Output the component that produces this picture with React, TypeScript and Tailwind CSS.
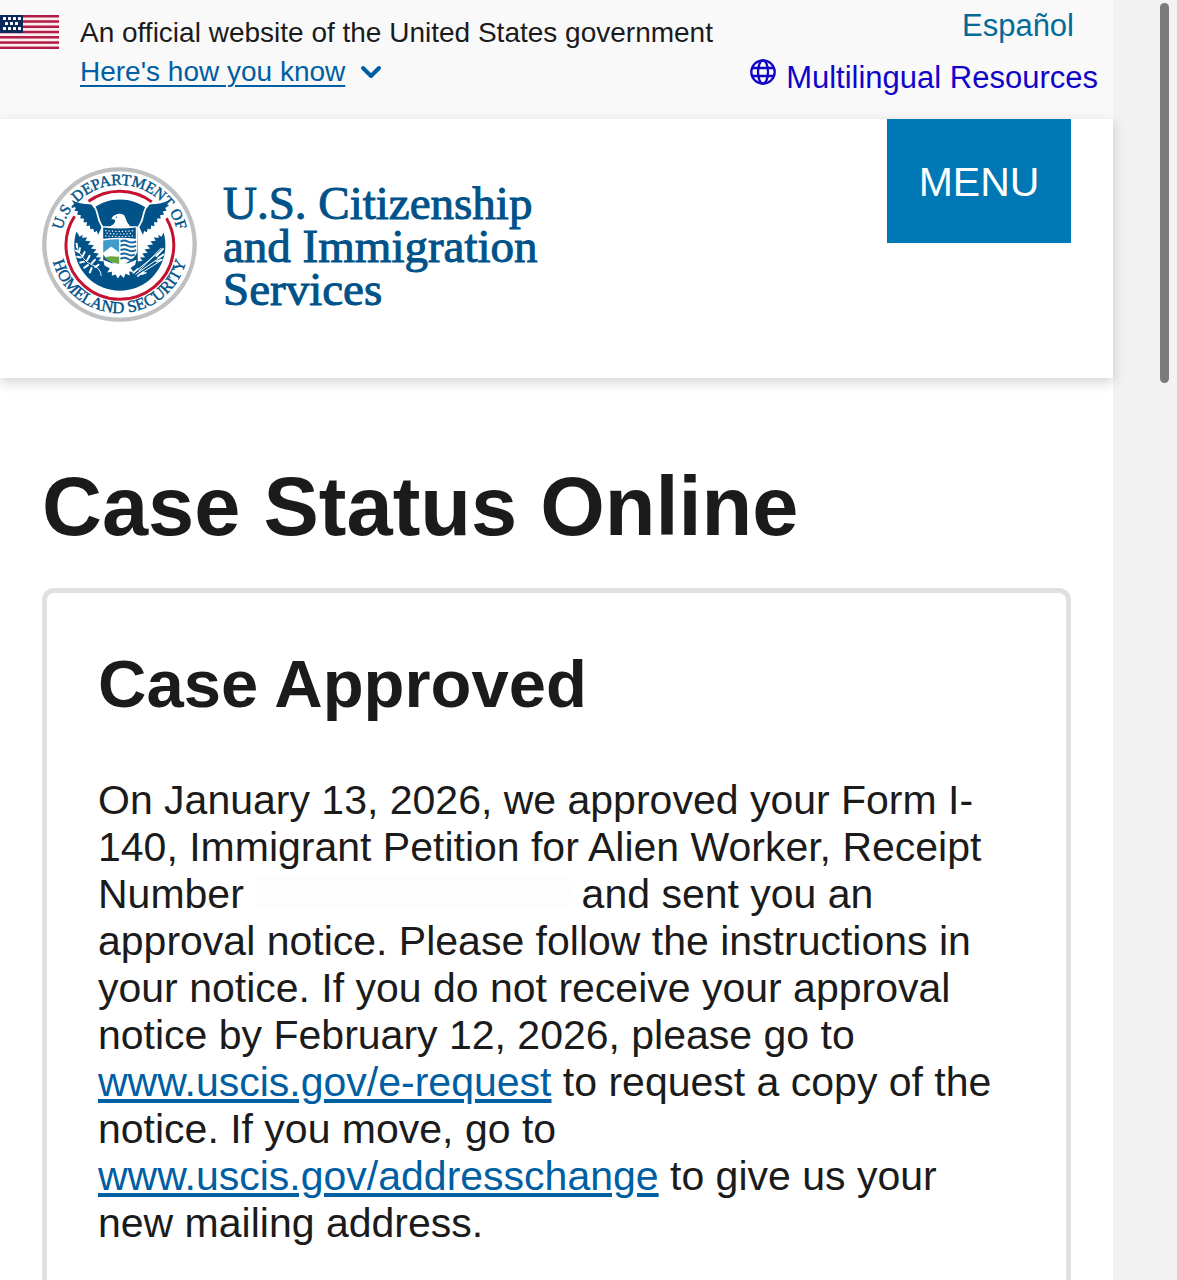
import { ChevronDown } from 'lucide-react'

const stripes = [0, 2, 4, 6, 8, 10, 12]

const stars = [
  [3, 2], [8, 2], [13, 2], [18, 2],
  [5, 7], [10, 7], [15, 7],
  [3, 12], [8, 12], [13, 12], [18, 12],
]

function Flag() {
  return (
    <svg viewBox="0 0 59 34" className="mt-[15px] h-[34px] w-[59px] shrink-0" aria-hidden="true">
      <rect width="59" height="34" fill="#fdeef2" />
      {stripes.map((n) => (
        <rect key={n} y={n * 2.63} width="59" height="2.5" fill="#b01c44" />
      ))}
      <rect width="23" height="18" fill="#0b2a5b" />
      {stars.map(([x, y]) => (
        <rect key={`${x}-${y}`} x={x} y={y} width="3" height="3" rx="0.6" fill="#fff" />
      ))}
    </svg>
  )
}

function Globe() {
  return (
    <svg
      viewBox="0 0 26 26"
      className="mb-3 size-[26px]"
      fill="none"
      stroke="currentColor"
      strokeWidth="2.3"
      aria-hidden="true"
    >
      <circle cx="13" cy="13" r="11.7" />
      <ellipse cx="13" cy="13" rx="5" ry="11.7" />
      <path d="M2.5 9h21M2.5 17h21" />
    </svg>
  )
}

function Wing() {
  return (
    <>
      <path
        fill="#005288"
        d="M123 135Q148 148 178 148Q194 153 201 172Q209 196 217 216L203 239L198 228L191 234L188 221L179 225L178 212L168 214L169 201L159 203L160 191L149 191L151 181L139 179L143 170L131 167L136 159L124 152L131 147Z"
      />
      {/* breast feathers between the wing and the shield */}
      <path
        fill="#fff"
        d="M190 150Q199 158 204 180Q210 205 220 217L218 320L204 318L212 308L196 307L205 296L188 294L198 284L181 281L190 271L172 269L180 259L164 258L170 248L154 249L157 240L147 246L137 228L134 215L135 190L203 240L213 217Q201 198 197 174Q194 160 184 152Z"
      />
    </>
  )
}

function Seal() {
  return (
    <svg viewBox="34 36 466 466" className="size-[155px] shrink-0" role="img" aria-label="Department of Homeland Security seal">
      <defs>
        <path id="seal-top" d="M89 268a178 178 0 0 1 356 0" />
        <path id="seal-bottom" d="M60 268a207 207 0 0 0 414 0" />
      </defs>
      <circle cx="267" cy="269" r="226" fill="#fff" stroke="#bfc0c2" strokeWidth="13" />
      <circle cx="268" cy="271" r="137" fill="#005288" />

      {/* clears the disc behind the outstretched wings */}
      <path fill="#fff" d="M118 150L184 150L203 238L137 232L118 240Z" />
      <path fill="#fff" d="M422 150L356 150L337 238L403 232L422 240Z" />
      <g fill="none" stroke="#c41230" strokeWidth="9">
        <path d="M174 139A160 160 0 0 1 364 141" />
        <path d="M132 184A162 162 0 1 0 408 190" />
      </g>
      <Wing />
      <g transform="translate(540) scale(-1 1)">
        <Wing />
      </g>

      {/* head and neck */}
      <path
        fill="#fff"
        d="M243 194Q244 184 254 180Q268 173 281 181Q286 190 290 202L300 216H236L249 208Q255 202 254 195L246 192Z"
      />
      <circle cx="258" cy="187" r="2" fill="#005288" />

      {/* tail */}
      <path
        fill="#fff"
        d="M218 315L244 325H292L318 315L314 330L300 340L310 352L296 350L298 362L285 357L280 370L270 360L262 371L255 359L244 363L244 351L230 353L238 341L222 332Z"
      />

      {/* shield */}
      <path fill="#fff" d="M214 214H320V290Q316 314 268 334Q220 314 214 290Z" />
      <path fill="#005288" d="M218 218Q268 224 316 218V252Q268 246 218 252Z" />
      <g stroke="#fff" strokeWidth="3.5" strokeDasharray="4 6" fill="none">
        <path d="M224 227Q268 232 312 227" />
        <path d="M228 235Q268 240 308 235" />
        <path d="M224 243Q268 247 312 243" />
      </g>
      <path fill="#3f9bcb" d="M218 257Q240 253 266 253V293L242 275L218 294Z" />
      <path fill="#fff" d="M218 296L242 277L266 295V305L236 306Z" />
      <path fill="#69a742" d="M220 308L240 304L266 306V328Q238 322 220 308Z" />
      <g fill="none" stroke="#17699f" strokeWidth="6">
        <path d="M270 260q11 -6 22 0t25 0" />
        <path d="M270 273q11 -6 22 0t25 0" />
        <path d="M270 286q11 -6 22 0t25 0" />
        <path d="M270 299q11 -6 22 0t21 0" />
        <path d="M270 312q11 -6 22 0t10 0" />
      </g>

      {/* olive branch */}
      <g stroke="#fff" strokeLinecap="round" fill="none">
        <path strokeWidth="3" d="M137 275Q157 320 184 330T212 362" />
        <path
          strokeWidth="6"
          d="M138 267l2 10M136 287l8 5M148 280l-2 10M140 306l10 2M162 292l-6 12M149 323l11-2M177 303l-7 13M161 339l11-8M193 315l-9 10M178 353l5-13M204 330l-10 6"
        />
      </g>
      {/* arrows */}
      <g stroke="#fff" strokeLinecap="round" fill="none">
        <path strokeWidth="3" d="M312 352L396 284M316 358L398 302M322 362L394 316M326 348L392 280" />
        <path strokeWidth="5" d="M378 304l20-22M383 310l16-11M378 320l16-6M308 354l14-12M322 364l16-12M334 358l12-4" />
      </g>

      <g fill="#005288" stroke="#005288" strokeWidth="1.2" fontFamily="'Liberation Serif', serif" textAnchor="middle">
        <text fontSize="47">
          <textPath href="#seal-top" startOffset="50%">U.S. DEPARTMENT OF</textPath>
        </text>
        <text fontSize="50">
          <textPath href="#seal-bottom" startOffset="50%">HOMELAND SECURITY</textPath>
        </text>
      </g>
    </svg>
  )
}

export default function App() {
  return (
    <div className="flex min-h-screen bg-[#f2f2f2] font-['Liberation_Sans',sans-serif] text-[#1b1b1b]">
      <div className="flex grow flex-col bg-white">
        <div className="flex h-[119px] justify-between bg-[#f9f9f9] pr-[15px]">
          <div className="flex">
            <Flag />
            <div className="ml-[21px] mt-[13px] text-[28px] leading-[39px]">
              <p>An official website of the United States government</p>
              <button type="button" className="flex items-center gap-[10px] text-[#005ea2]">
                <span className="underline decoration-2 underline-offset-4">Here's how you know</span>
                <ChevronDown size={32} strokeWidth={3} />
              </button>
            </div>
          </div>
          <div className="flex flex-col items-end text-[31px] leading-[52px]">
            <a href="#es" className="mr-6 text-[#046b99]">Español</a>
            <a href="#languages" className="flex items-center gap-[10px] text-[#1005c9]">
              <Globe />
              Multilingual Resources
            </a>
          </div>
        </div>

        <header className="flex h-[259px] items-start justify-between bg-white px-[42px] shadow-[0_4px_12px_rgba(0,0,0,0.18)]">
          <a href="#home" className="mt-12 flex items-center gap-[26px]">
            <Seal />
            <span className="pt-1 font-['Liberation_Serif',serif] text-[47px] leading-[43px] text-[#005288] [-webkit-text-stroke:1px_#005288]">
              U.S. Citizenship
              <br />
              and Immigration
              <br />
              Services
            </span>
          </a>
          <button type="button" className="h-[124px] w-[184px] bg-[#0078b5] pt-1 text-[41px] text-white">
            MENU
          </button>
        </header>

        <main className="flex grow flex-col px-[42px] pt-[84px]">
          <h1 className="text-[83px] leading-[90px] font-bold">Case Status Online</h1>
          <section className="mt-9 grow rounded-t-xl border-[5px] border-b-0 border-[#e0e0e0] px-[51px] pt-[51px]">
            <h2 className="text-[67px] leading-[80px] font-bold">Case Approved</h2>
            <p className="mt-[53px] text-[41px] leading-[47px]">
              On January 13, 2026, we approved your Form I-140, Immigrant Petition for Alien Worker, Receipt
              Number <span className="inline-block h-8 w-[315px] rounded-lg bg-[#fdfdfd] align-baseline" /> and
              sent you an approval notice. Please follow the instructions in your notice. If you do not receive
              your approval notice by February 12, 2026, please go
              to <a href="#e-request" className="text-[#005ea2] underline">www.uscis.gov/e-request</a> to
              request a copy of the notice. If you move, go
              to <a href="#address" className="text-[#005ea2] underline">www.uscis.gov/addresschange</a> to give us
              your new mailing address.
            </p>
          </section>
        </main>
      </div>
      <div className="w-16 shrink-0 pt-[3px]">
        <div className="ml-[47px] h-[380px] w-[9px] rounded-full bg-[#7b7b7b]" />
      </div>
    </div>
  )
}
